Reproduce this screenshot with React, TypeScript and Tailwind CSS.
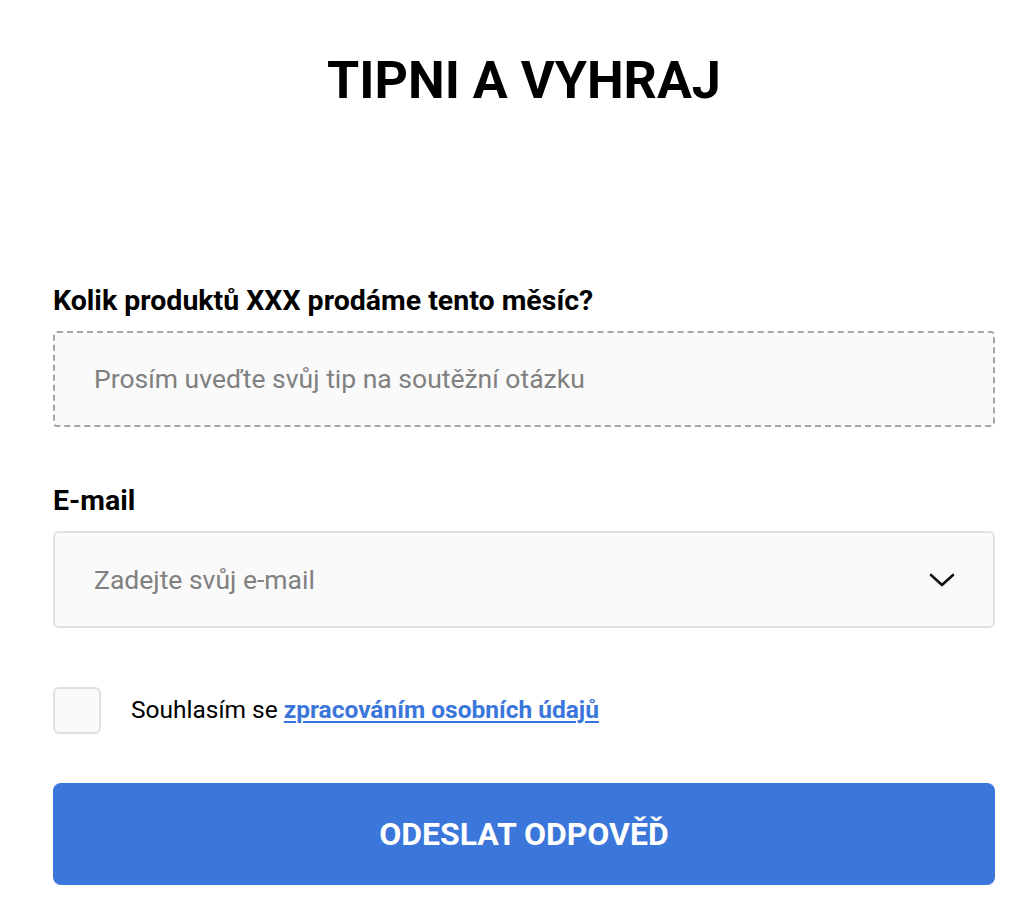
import React from "react";

export default function App() {
  return (
    <div className="min-h-[922px] bg-white" style={{ fontFamily: "Roboto, 'Liberation Sans', sans-serif" }}>
      <div className="ml-[53px] w-[942px] pt-[48px]">
        <h1 className="text-center text-[52px] font-bold leading-[66px] text-black">TIPNI A VYHRAJ</h1>

        <div className="mt-[171px]">
          <label className="block text-[28.5px] font-bold leading-[32px] text-black">Kolik produktů XXX prodáme tento měsíc?</label>
          <div className="mt-[14px] flex h-[96px] items-center rounded-[4px] border-2 border-dashed border-[#a6a6a6] bg-[#fafafa] pl-[39px]">
            <span className="text-[26.5px] text-[#808080]">Prosím uveďte svůj tip na soutěžní otázku</span>
          </div>
        </div>

        <div className="mt-[58px]">
          <label className="block text-[28.5px] font-bold leading-[32px] text-black">E-mail</label>
          <div className="mt-[14px] flex h-[97px] items-center justify-between rounded-[6px] border-2 border-[#e0e0e0] bg-[#fafafa] pl-[39px] pr-[38px]">
            <span className="text-[26.5px] text-[#808080]">Zadejte svůj e-mail</span>
            <svg width="26" height="16" viewBox="0 0 26 16" fill="none">
              <path d="M2 3 L13 13 L24 3" stroke="#111" strokeWidth="2.6" strokeLinecap="round" strokeLinejoin="round" />
            </svg>
          </div>
        </div>

        <div className="mt-[59px] flex items-center">
          <div className="h-[47px] w-[48px] rounded-[6px] border-2 border-[#e0e0e0] bg-[#fafafa]" />
          <span className="ml-[30px] text-[24.5px] text-black">
            Souhlasím se{" "}
            <a href="#" className="font-bold text-[#3b76db] underline decoration-2 underline-offset-[3px]">zpracováním osobních údajů</a>
          </span>
        </div>

        <button className="mt-[49px] flex h-[102px] w-full items-center justify-center rounded-[8px] bg-[#3b76db]">
          <span className="text-[32px] font-bold text-white">ODESLAT ODPOVĚĎ</span>
        </button>
      </div>
    </div>
  );
}
